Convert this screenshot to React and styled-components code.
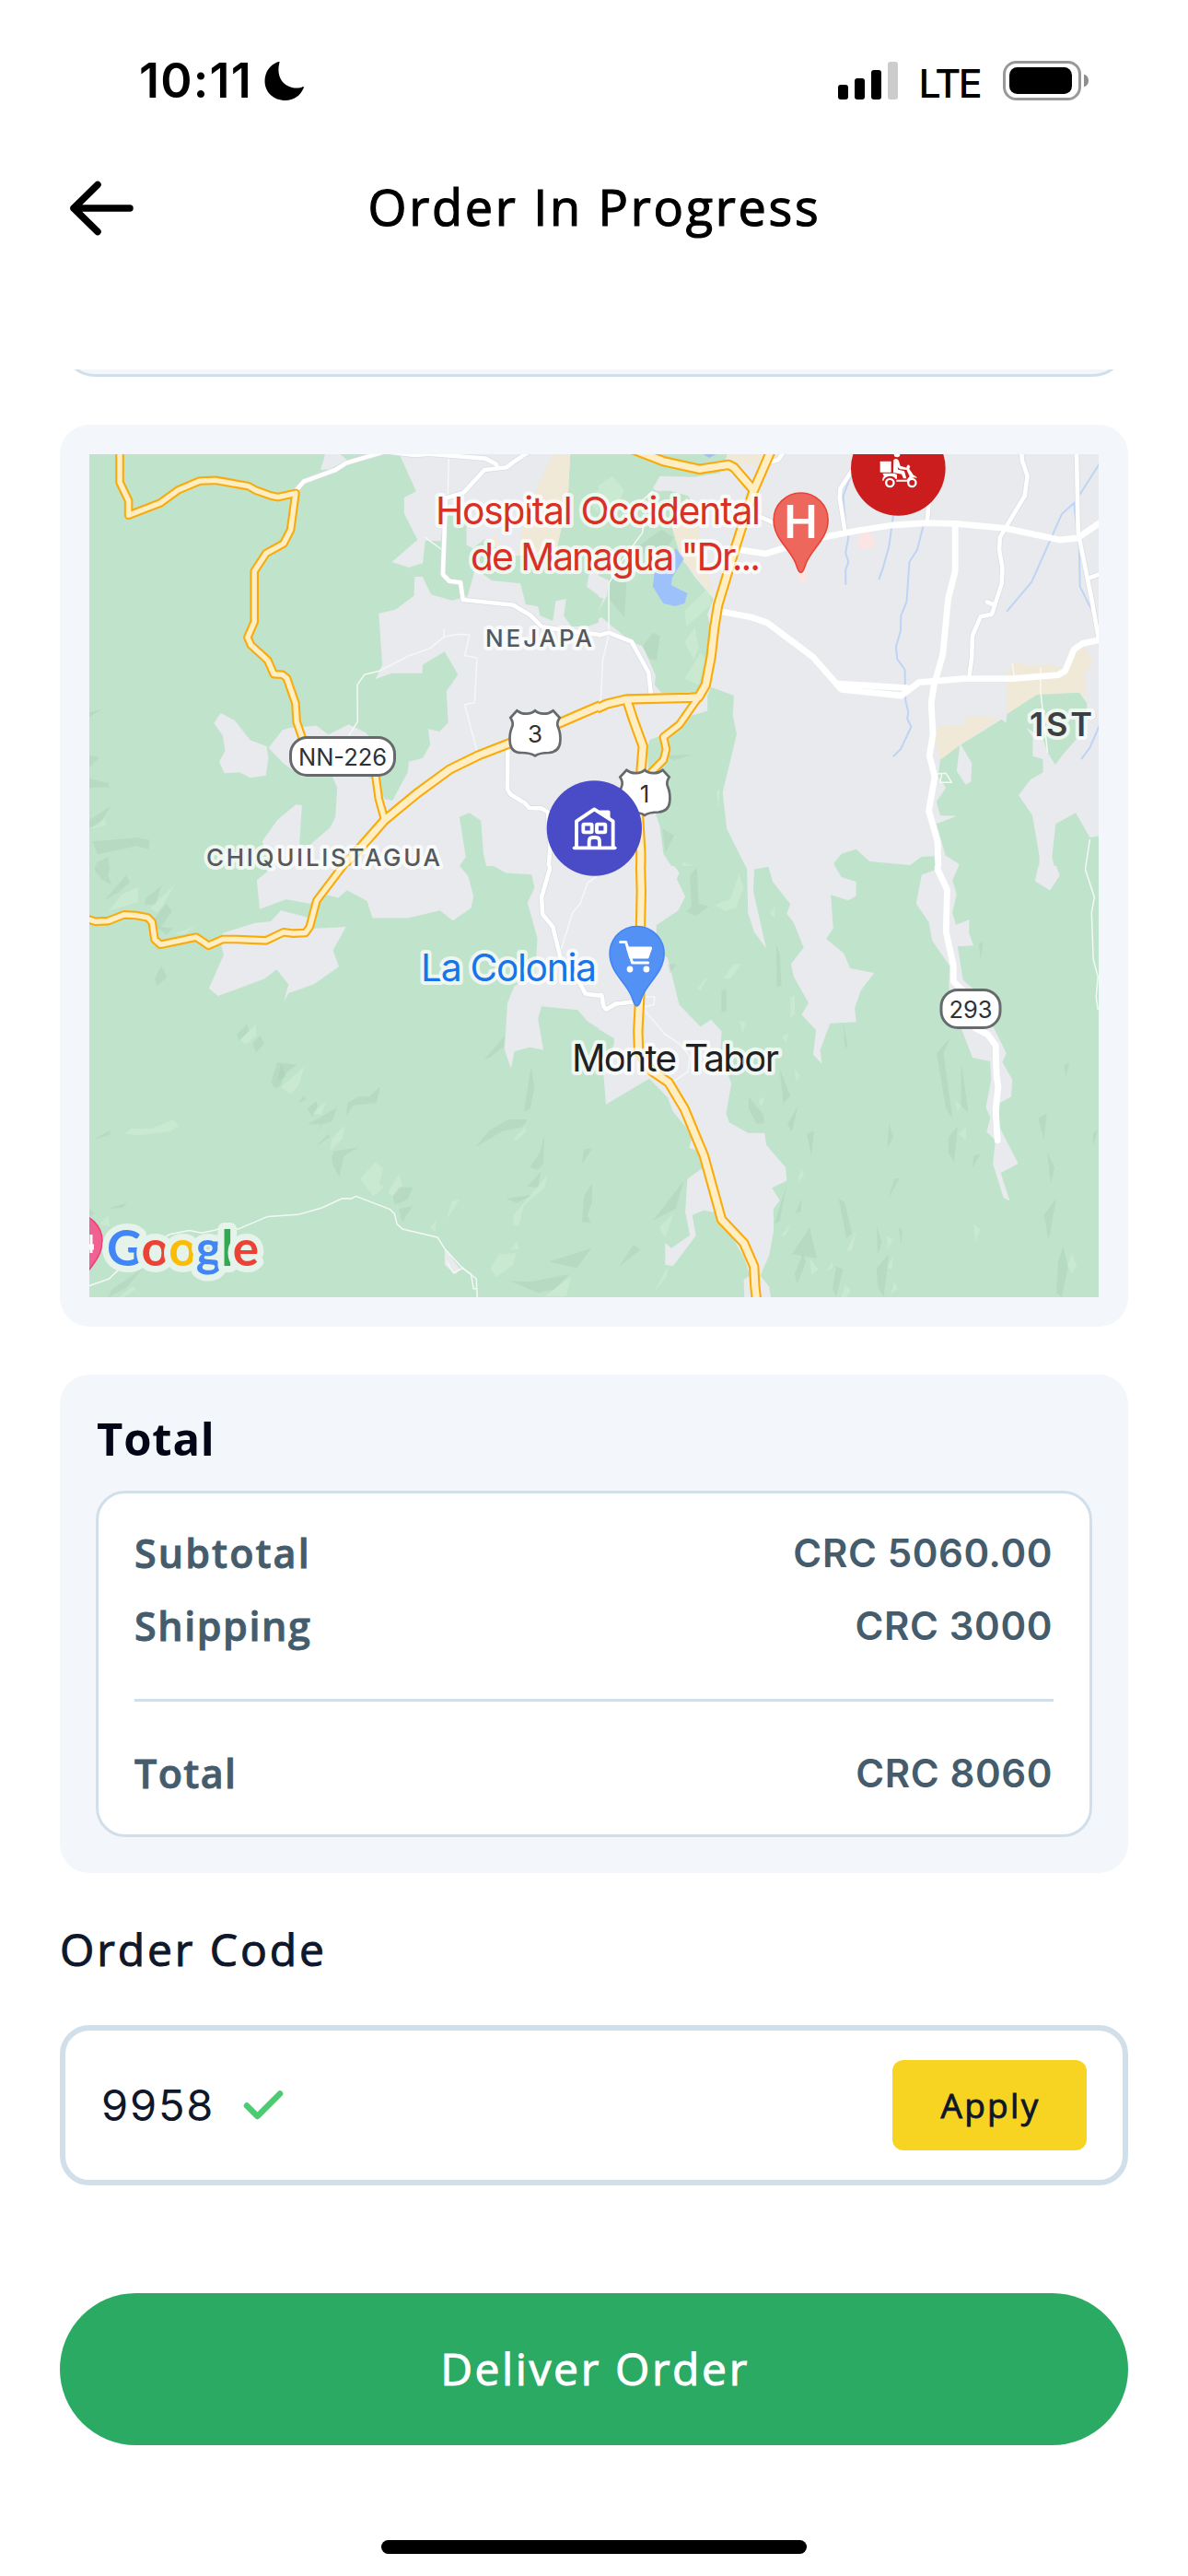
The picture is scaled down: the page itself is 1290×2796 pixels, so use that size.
import React from "react";
import styled, { createGlobalStyle } from "styled-components";

const GlobalStyle = createGlobalStyle`
  *, *::before, *::after { box-sizing: border-box; }
  body { margin: 0; background: #ffffff; }
`;

const sans = `"Open Sans", "Noto Sans", sans-serif`;
const system = `Inter, Roboto, sans-serif`;

const Screen = styled.main`
  display: flex;
  flex-direction: column;
  width: 1290px;
  height: 2796px;
  overflow: hidden;
  background: #ffffff;
  font-family: ${sans};
`;

const StatusBar = styled.div`
  display: flex;
  align-items: center;
  justify-content: space-between;
  height: 176px;
  padding: 0 107px 0 151px;
`;

const StatusGroup = styled.div`
  display: flex;
  align-items: center;
  gap: ${(p) => p.$gap}px;
`;

const Clock = styled.span`
  font: 600 52px/60px ${system};
  letter-spacing: 1.2px;
  color: #000;
`;

const Network = styled.span`
  font: 500 43px/60px ${system};
  letter-spacing: -2.6px;
  color: #000;
  padding-top: 3px;
  margin-left: -3px;
`;

const Header = styled.header`
  display: grid;
  grid-template-columns: 80px 1fr 80px;
  align-items: center;
  height: 100px;
  padding: 0 70px;
  margin-bottom: 125px;
`;

const BackButton = styled.button`
  display: flex;
  padding: 0;
  border: 0;
  background: none;
  color: #000;
`;

const Title = styled.h1`
  margin: 0;
  padding: 0 0 4px 1px;
  text-align: center;
  font-weight: 500;
  font-size: 54px;
  line-height: 60px;
  letter-spacing: 2.7px;
  -webkit-text-stroke: 1.2px currentColor;
  color: #000;
`;

const ScrollArea = styled.section`
  display: flex;
  flex-direction: column;
  padding: 0 65px;
  overflow: hidden;
`;

const PreviousCard = styled.div`
  height: 88px;
  margin: -80px 0 52px;
  flex: none;
  border: 3px solid #d1dfea;
  border-radius: 39px;
  background: #f3f6fb;
`;

const MapCard = styled.div`
  padding: 32px;
  margin-bottom: 52px;
  border-radius: 32px;
  background: #f3f6fb;
`;

const MapSvg = styled.svg`
  display: block;
  width: 1096px;
  height: 915px;
`;

const TotalCard = styled.div`
  padding: 39px;
  margin-bottom: 53px;
  border-radius: 32px;
  background: #f3f6fb;
`;

const CardTitle = styled.h2`
  margin: 0 0 27px;
  padding-left: 1px;
  font-weight: 700;
  font-size: 49px;
  line-height: 60px;
  letter-spacing: 0.8px;
  color: #020617;
`;

const Summary = styled.div`
  display: flex;
  flex-direction: column;
  gap: 19px;
  padding: 35px 39px 36px;
  border: 3px solid #d1dfea;
  border-radius: 32px;
  background: #ffffff;
`;

const SummaryRow = styled.div`
  display: flex;
  justify-content: space-between;
  font-weight: 600;
  font-size: 43px;
  line-height: 60px;
  letter-spacing: ${(p) => p.$track ?? 2}px;
  -webkit-text-stroke: 0.9px currentColor;
  color: #455c6c;
`;

const Amount = styled.span`
  margin-right: 1px;
  font-family: ${system};
  font-size: 42px;
  letter-spacing: 0.6px;
  -webkit-text-stroke: 0;
`;

const Divider = styled.hr`
  width: 100%;
  height: 3px;
  margin: 30px 0 29px;
  border: 0;
  background: #d1dfea;
`;

const FieldLabel = styled.label`
  margin-bottom: 52px;
  font-weight: 500;
  font-size: 48px;
  line-height: 60px;
  letter-spacing: 2.9px;
  -webkit-text-stroke: 1px currentColor;
  color: #0f172a;
`;

const CodeField = styled.div`
  display: flex;
  align-items: center;
  height: 174px;
  padding: 0 39px;
  margin-bottom: 117px;
  border: 6px solid #d1dfea;
  border-radius: 32px;
  background: #ffffff;
`;

const CodeValue = styled.span`
  width: 154px;
  font-family: ${system};
  font-size: 47px;
  line-height: 60px;
  letter-spacing: 1.8px;
  color: #0f172a;
`;

const ApplyButton = styled.button`
  width: 211px;
  height: 98px;
  margin-left: auto;
  padding: 0 0 0 2px;
  border: 0;
  border-radius: 12px;
  background: #f8d422;
  color: #0f172a;
  font: 500 37px/60px ${sans};
  letter-spacing: 2.3px;
  -webkit-text-stroke: 0.9px currentColor;
`;

const DeliverButton = styled.button`
  height: 165px;
  flex: none;
  padding: 0 0 2px 2px;
  border: 0;
  border-radius: 83px;
  background: #2baa64;
  color: #ffffff;
  font: 500 48px/60px ${sans};
  letter-spacing: 2.6px;
  -webkit-text-stroke: 1px currentColor;
`;

const HomeIndicator = styled.div`
  width: 462px;
  height: 15px;
  margin: 103px auto 0;
  border-radius: 8px;
  background: #000;
`;

const GREEN = "#c0e3cb";
const GREY = "#e8eaed";
const SAND = "#f0e9d8";

const tiles = [
  {
    id: "nw",
    x: 97, y: 493, w: 553, h: 447,
    view: "96.7 129 1445.2 1341",
    base: GREEN,
    areas: [
      [GREY, "965,100 1024,250 990,270 990,322 1028,408 955,480 1003,498 1020,528 1018,590 965,635 918,647 928,815 908,862 955,842 1042,842 1042,815 1105,772 1143,847 1110,900 1115,1003 1090,1032 1058,1023 1064,1075 1043,1118 1003,1130 1000,1165 957,1257 935,1252 905,1190 870,1170 787,1180 800,1215 795,1310 780,1345 722,1402 693,1400 700,1272 683,1270 630,1320 587,1390 600,1430 620,1470 590,1520 1600,1520 1600,100"],
      [GREY, "768,120 753,180 780,178 828,148 800,120"],
      [GREY, "470,972 510,997 553,1060 600,1080 605,1118 598,1175 553,1183 523,1165 480,1168 465,1130 482,1095 475,1045 450,1005"],
      [GREY, "605,1085 645,1027 665,1020 742,1013 775,1042 833,1009 880,1035 900,1060 900,1180 700,1180 645,1133"],
      [GREEN, "1043,484 1050,410 1095,412 1105,300 1167,300 1167,425 1185,435 1220,405 1260,430 1300,460 1420,455 1455,270 1462,100 1600,100 1600,480 1515,520 1508,560 1555,600 1543,640 1600,620 1600,655 1510,690 1465,690 1443,655 1450,600 1420,607 1412,672 1376,655 1370,625 1335,618 1320,550 1238,540 1192,500 1170,592 1125,605 1067,586 1042,528 1020,528 1003,498"],
      [SAND, "1415,120 1462,120 1455,270 1420,450 1310,460 1325,370 1375,220"],
      [SAND, "1235,400 1252,395 1262,435 1245,430"],
      [GREEN, "1147,1310 1175,1297 1208,1322 1215,1430 1230,1500 1150,1500 1147,1470 1165,1440"],
    ],
    dark: ["97,1185 150,1200 153,1213 97,1215", "97,1320 157,1275 125,1335 97,1345", "105,1390 230,1378 268,1385 265,1415 230,1405 120,1432", "115,1460 150,1440 155,1500 130,1490", "97,1110 125,1115 97,1150", "97,970 132,960 97,985"],
    light: ["97,1350 140,1315 145,1337", "1515,270 1568,220 1568,350 1530,310"],
    streams: [],
    lanes: ["1117,129 1114,270", "833,1045 858,1000 857,880 877,847 920,835 1000,787 1065,760 1103,724 1145,715 1176,718 1162,785 1197,792 1190,938 1162,944 1200,1110", "1103,700 1103,724", "1050,400 1095,438", "1570,740 1555,790 1548,935"],
    streets: ["682,248 705,218 795,180 825,158 925,124", "950,122 1020,132 1060,128 1220,143 1250,160 1255,172", "1345,120 1300,155 1280,172 1218,180 1158,255 1108,272 1100,520 1118,542 1150,547 1157,603 1300,620 1350,655 1380,690 1430,700 1550,718 1600,700", "1284,1080 1283,1220 1292,1237 1333,1265 1345,1281 1380,1282 1398,1295 1405,1400 1398,1500"],
    avenues: [],
    roads: ["183,110 183,220 208,280 208,328 298,288 350,245 410,216 455,214 548,233 570,247 612,264 632,269 682,256 668,375 648,420 598,452 565,510 565,675 546,725 555,750 603,800 620,845 645,847 657,858 682,940 685,1000 700,1050", "908,1165 918,1250 935,1320"],
    highways: ["760,1540 816,1470 870,1405 935,1320 1025,1235 1120,1155 1200,1110 1285,1072 1430,1005 1490,975 1545,948 1600,925"],
  },
  {
    id: "ne",
    x: 650, y: 493, w: 543, h: 447,
    view: "26.1 129 1419 1341",
    base: GREY,
    areas: [
      [GREEN, "-20,100 395,100 385,160 370,190 300,203 200,200 180,240 190,248 230,248 280,265 300,300 240,330 235,370 270,480 300,530 352,600 335,650 345,700 330,860 325,905 205,907 185,880 188,850 152,755 120,740 55,680 35,660 -20,690 -20,570 40,600 25,640 50,590 55,540 -20,500"],
      [GREEN, "345,887 410,915 407,980 418,1040 378,1230 390,1350 445,1475 445,1500 250,1500 210,1430 200,1340 170,1240 165,1100 170,1060 240,1030 275,985 335,965 335,915"],
      [SAND, "235,370 275,270 290,290 325,450 352,600 310,530 260,470"],
      [SAND, "400,120 510,120 475,168 430,160 385,150"],
      ["#9dc1fa", "245,435 268,470 235,530 232,555 278,582 270,615 243,624 210,615 180,560 185,510 215,500"],
      ["#9dc1fa", "310,120 375,120 340,141"],
      ["#fbe5e4", "765,385 795,380 812,415 805,435 762,435"],
      ["#fbe5e4", "588,515 612,505 620,540 595,548"],
      [SAND, "1185,980 1185,840 1208,800 1240,818 1320,815 1345,830 1365,755 1400,750 1430,805 1405,840 1410,925 1390,905 1270,912"],
      [SAND, "980,1060 990,1015 1060,1010 1075,980 1165,988 1060,1072 995,1125"],
      [GREEN, "995,1125 1050,1078 1170,992 1182,1005 1185,975 1270,912 1390,905 1412,940 1410,1020 1345,1105 1322,1140 1300,1100 1285,1050 1240,1020 1258,1050 1258,1112 1287,1122 1287,1165 1250,1190 1218,1240 1257,1305 1277,1440 1275,1500 1030,1500 1050,1465 1010,1435 985,1333 1042,1307 995,1305 985,1260 1012,1215 990,1180"],
      [GREY, "1052,1070 1085,1135 1083,1195 1068,1205 1042,1160"],
      [GREEN, "1323,1333 1380,1297 1420,1377 1460,1370 1460,1500 1325,1500 1313,1440"],
      [GREEN, "694,1460 715,1430 757,1415 795,1455 910,1467 942,1440 978,1438 990,1500 700,1500"],
    ],
    dark: ["85,490 105,540 100,660 55,600 60,540", "205,375 240,400 200,470 160,440 130,500 110,450", "150,755 180,710 200,720 190,800 170,795", "208,1350 240,1370 215,1430", "205,1110 290,1108 240,1125"],
    light: ["0,250 65,200 98,245 80,300 0,300", "270,640 340,560 345,620 275,690", "270,860 315,775 330,800 310,880", "262,1500 265,1455 292,1468", "270,740 300,690 310,760 295,800", "360,1230 370,1215 368,1285"],
    streams: ["742,200 720,265 727,360 735,400 727,450 735,480 727,505 727,552", "862,330 850,430 833,500 822,535", "948,360 930,440 908,480 900,610 884,655 883,705 870,755 873,795 895,830 897,930 905,970 902,990 913,1017 883,1090 863,1112", "1450,155 1378,285 1340,325 1255,545 1185,640", "1375,290 1390,440 1392,560 1427,640", "1450,1005 1420,1085 1397,1120"],
    lanes: ["55,700 55,550 90,480 150,385 155,355", "180,250 130,300", "55,715 38,800 32,930", "1200,810 1205,850", "1280,825 1280,900 1300,1100", "985,1170 1012,1168 1028,1198 995,1198 1000,1170", "1420,1385 1407,1480"],
    streets: ["480,330 522,352", "725,380 710,270 712,240 755,165", "958,353 962,300 970,250", "1180,370 1165,400 1163,440 1172,500 1170,550 1142,650 1110,658 1087,720 1085,790 1077,860", "1128,610 1145,618", "1382,110 1387,385 1425,600 1445,730", "1418,532 1460,515", "-20,718 30,718 55,710 120,740 168,840 175,915", "510,155 535,148 552,120", "1225,110 1228,150 1243,200 1235,265 1185,360"],
    avenues: ["368,640 460,660 505,678 635,790 700,875 715,895 885,915 935,872 1060,860 1200,860 1330,848 1350,835 1375,765 1400,745 1443,735 1480,733", "700,876 900,890", "425,440 500,453 600,418 660,400 760,378 860,360 960,353 1040,355 1180,370 1335,408 1385,402 1445,355 1480,330", "1038,360 1038,510 1018,600 1003,780 978,880 970,940 975,1040 965,1110 980,1180 963,1290 988,1390 990,1480 1000,1520"],
    roads: ["310,920 255,1010 210,1050 218,1090 210,1125 175,1165"],
    highways: ["120,112 210,152 312,178 395,163 410,172 465,245", "522,100 465,250 415,430 365,620 355,690 345,790 330,880 310,920 285,922 105,927 50,942 0,968 -40,985", "108,935 125,995 152,1080 145,1180", "139,1290 146,1430 145,1520"],
  },
  {
    id: "sw",
    x: 97, y: 940, w: 553, h: 468,
    view: "96.7 29.6 1445.2 1384.6",
    base: GREEN,
    areas: [
      [GREY, "590,-20 620,30 572,75 580,168 655,137 722,150 770,122 803,132 828,107 885,142 900,197 1000,197 1092,172 1128,205 1180,165 1187,128 1172,62 1147,28 1155,-20"],
      [GREY, "1225,-20 1245,30 1278,52 1352,57 1360,100 1340,147 1368,260 1362,380 1303,415 1283,470 1275,620 1293,680 1303,625 1345,612 1385,620 1370,520 1380,480 1483,492 1510,528 1568,570 1600,590 1600,-20"],
      [GREY, "475,245 565,213 612,207 640,172 720,195 735,230 825,225 788,300 805,353 733,410 662,438 648,467 662,410 628,362 593,392 462,447 436,422 478,315 470,280"],
      [GREY, "1105,1258 1150,1325 1135,1340 1105,1310"],
    ],
    dark: ["125,0 155,30 150,60 160,90 135,75 110,40", "140,140 200,60 212,80 185,110", "255,135 300,95 285,150 255,155", "290,185 315,150 332,175 300,225 335,230 315,250 275,215", "300,350 318,385 290,415 282,395", "515,570 545,537 550,560 520,590", "560,600 580,573 593,600 570,630", "630,660 685,668 650,700 640,735 625,745 612,725", "632,720 640,665 655,705", "690,790 705,767 712,780", "715,810 740,785 745,800 730,835", "715,860 800,805 785,850 755,860 745,885 752,858", "825,835 830,790 860,770 890,770 922,738 912,790 845,798", "740,930 775,890 780,900", "785,965 790,945 860,933 820,960 806,1027 788,990", "112,907 155,878 155,892", "958,1090 975,1060 1015,1062 1000,1100 965,1117", "975,1130 1013,1123 985,1172", "1218,650 1275,575 1272,610 1232,645", "1350,675 1360,740 1348,810 1330,817", "1193,932 1230,880 1285,843 1340,843 1325,868 1270,880", "1388,895 1385,985 1370,1005 1347,998 1375,950", "1340,1060 1378,1010 1370,1062", "1280,1098 1356,1085 1310,1112", "1400,1300 1522,1257 1480,1320", "1290,1362 1350,1365 1460,1340 1415,1390 1370,1400", "1500,940 1525,935 1495,985", "1500,1090 1523,1050 1523,1110 1510,1150 1520,1175 1495,1172", "150,1130 205,1110 190,1127", "97,1130 112,1145 97,1155", "160,1390 250,1320 200,1385 150,1414"],
    light: ["150,175 190,120 235,98 235,145", "270,165 340,88 300,165 290,180", "330,250 398,222 370,248", "525,590 568,537 572,575 540,602", "640,740 708,672 690,735 668,762", "730,825 770,782 755,828", "780,945 785,905 822,860 815,905", "197,890 215,873 275,872 335,843 350,865 325,882 235,895", "865,1035 908,980 930,1000 920,1050 932,1062 903,1090", "945,1078 975,1018 985,1055 957,1090", "1300,905 1335,865 1335,885 1308,912", "1300,1150 1395,1025 1390,1060 1330,1120 1315,1187 1300,1180", "1110,1165 1125,1107 1148,1100", "1063,1190 1080,1168 1080,1205", "1235,1320 1260,1275 1308,1272 1300,1310 1250,1350", "1290,1260 1310,1235 1318,1262", "125,1180 150,1150 155,1187", "1390,1412 1465,1345 1450,1412", "180,1414 220,1378 230,1388 195,1414"],
    streams: [],
    lanes: ["1535,65 1510,85 1490,150 1468,180 1435,300", "97,1377 153,1355 185,1320 300,1230 325,1212 380,1200 415,1208 450,1200 480,1188 520,1195 603,1155 688,1149 755,1128 815,1097 840,1098 853,1090 950,1132 963,1147 970,1180 985,1195 1085,1222 1105,1258 1155,1320 1195,1355 1198,1430", "1155,1320 1180,1340 1187,1387 1195,1387", "1112,1302 1130,1336 1158,1320"],
    streets: ["1403,-20 1403,40 1380,130 1383,185 1412,225 1435,330", "1485,400 1505,440 1550,447 1560,485 1600,480"],
    avenues: [],
    roads: ["80,196 115,208 150,206 195,186 230,188 262,195 275,210 282,265 298,282 400,258 435,285 475,265 515,265 598,269 648,242 675,246 710,244 722,225 742,140 816,30 850,-20"],
    highways: [],
  },
  {
    id: "se",
    x: 650, y: 940, w: 543, h: 468,
    view: "26.1 29.6 1419 1384.6",
    base: GREEN,
    areas: [
      [GREY, "-30,-20 205,-20 255,50 248,72 272,128 252,172 190,220 190,300 222,325 255,475 315,545 345,523 375,560 372,630 390,690 403,727 388,825 397,853 450,887 497,887 502,925 557,998 560,1040 518,1063 540,1103 522,1132 523,1200 510,1280 485,1345 510,1380 517,1430 440,1430 438,1357 455,1345 440,1290 380,1170 358,1143 325,1135 292,1150 302,1217 237,1314 215,1310 215,1240 233,1257 285,1215 272,1140 278,1035 320,1000 305,943 283,935 290,905 275,870 237,818 222,773 170,712 47,795 40,700 70,600 70,583 0,535 -30,520"],
      [GREY, "430,-20 447,40 450,180 467,240 502,295 465,110 468,40 508,32 520,80 570,152 560,183 580,212 608,292 572,343 580,385 622,470 602,507 643,557 635,635 660,665 655,620 683,535 757,530 753,487 770,430 808,373 740,358 722,310 672,263 692,230 685,122 735,140 757,125 757,80 715,65 693,22 705,-20"],
      [GREY, "980,-20 985,40 943,58 927,150 963,210 973,270 1022,350 1020,420 1055,550 1087,645 1137,657 1140,715 1125,805 1138,838 1127,883 1152,910 1145,985 1175,1095 1193,1105 1167,1015 1217,985 1160,860 1165,790 1197,770 1200,715 1172,660 1183,630 1150,555 1090,425 1060,395 1045,288 1090,285 1077,245 1078,202 1040,218 1030,180 1042,120 1030,75 1050,25 1013,-20"],
      [GREY, "1278,-20 1278,10 1264,78 1307,108 1335,60 1308,-20"],
    ],
    dark: ["285,60 305,35 310,150 340,160 300,190 275,175 290,160", "530,285 540,310 545,415 532,417", "375,430 388,425 388,495 375,500", "720,530 732,605 725,617", "985,630 1025,580 1005,630 1030,840 1012,810", "1055,660 1075,820 1055,800", "1020,900 1045,865 1035,980 1018,950", "452,770 495,830 495,855 475,858 452,810", "540,680 570,768 550,792", "562,860 592,798 575,882", "617,890 637,882 630,960", "850,855 862,900 845,937", "848,1098 865,1035 880,1032", "1105,280 1117,272 1110,333", "1347,670 1362,660 1352,707", "1273,840 1298,823 1290,905", "1300,950 1320,1000 1308,1050", "1290,1150 1325,1098 1303,1230", "1330,1300 1345,1250 1358,1320 1340,1414 1325,1400", "707,1098 725,1110 745,1210 730,1225", "815,1185 830,1240 818,1275", "575,1275 625,1190 645,1290", "582,1340 605,1275 615,1300 590,1370", "690,1385 700,1315 720,1325 700,1414", "815,1320 850,1275 835,1414 818,1380", "180,1168 268,1040 245,1130", "85,1315 125,1245 145,1262", "525,1180 560,1050 540,1170", "585,1145 602,1098 600,1140", "1090,960 1108,955 1088,998", "1428,890 1443,875 1430,930", "877,1190 888,1200 885,1250", "223,345 248,345 228,375"],
    light: ["355,155 400,135 425,55 438,100 415,165 385,173", "512,180 528,158 525,200", "380,390 410,345 432,343 400,392", "305,425 330,388 335,390 315,427", "570,450 583,443 583,505 570,517", "425,525 445,530 435,568", "545,580 565,565 560,597", "582,680 597,703 585,722", "480,780 498,770 487,805", "1035,780 1055,800 1045,818", "1047,890 1070,865 1068,910", "590,1050 600,1003 610,1020", "540,1220 570,1180 558,1215", "197,1190 240,1145 215,1222", "1090,1180 1110,1195 1095,1235", "843,1215 862,1230 848,1258", "730,1265 758,1200 745,1265", "625,1290 650,1325 630,1342", "673,1330 690,1300 690,1320", "845,1320 860,1285 860,1325", "855,1405 865,1365 875,1385", "715,1414 725,1375 742,1390 730,1414", "1357,1310 1370,1275 1383,1315 1368,1340", "180,1405 222,1315 220,1345"],
    streams: [],
    lanes: ["155,490 215,570 255,600 285,640 280,690 240,720", "160,450 185,450 183,475 155,482", "1415,-10 1407,40 1433,130 1425,180 1430,330 1443,385 1438,450 1443,490", "0,78 15,65"],
    streets: ["-20,445 35,445 40,480 48,490 75,472 130,465"],
    avenues: ["988,-20 988,40 1015,105 1012,240 1033,350 1033,400 1060,430", "1095,550 1130,570 1153,605 1155,700 1160,740 1153,810 1158,910"],
    roads: [],
    highways: ["144,-20 147,110 145,220 143,450 138,560 140,625 165,670 180,690 225,725 270,810 325,960 375,1165 438,1240 467,1315 470,1380 475,1430"],
  },
];

const Line = styled.polyline.attrs({ vectorEffect: "non-scaling-stroke" })`
  fill: none;
  stroke: ${(p) => p.$color};
  stroke-width: ${(p) => p.$width}px;
  stroke-linecap: round;
  stroke-linejoin: round;
`;

const Lines = ({ items, color, width }) =>
  items.map((points) => <Line key={points} points={points} $color={color} $width={width} />);

const Shapes = ({ items, color }) =>
  items.map((points) => <polygon key={points} points={points} fill={color} />);

const Tile = ({ t }) => (
  <svg x={t.x} y={t.y} width={t.w} height={t.h} viewBox={t.view} preserveAspectRatio="none">
    <rect x="-50" y="-50" width="1800" height="1800" fill={t.base} />
    {t.areas.map(([color, points]) => (
      <polygon key={points} points={points} fill={color} />
    ))}
    <Shapes items={t.dark} color="rgba(150, 190, 165, 0.22)" />
    <Shapes items={t.light} color="rgba(215, 240, 215, 0.42)" />
    <Lines items={t.streams} color="#bfd4f5" width={2} />
    <Lines items={t.lanes} color="#f5f8f6" width={1.5} />
    <Lines items={t.streets} color="#d9dce0" width={6} />
    <Lines items={t.streets} color="#ffffff" width={4.6} />
    <Lines items={t.avenues} color="#ffffff" width={6.8} />
    <Lines items={t.roads} color="#f9ab0c" width={9.6} />
    <Lines items={t.highways} color="#f9ab0c" width={11.4} />
    <Lines items={t.roads} color="#ffeec4" width={5.4} />
    <Lines items={t.highways} color="#ffeec4" width={7.2} />
  </svg>
);

const MapLabel = styled.text`
  font-family: ${system};
  font-weight: ${(p) => p.$weight ?? 400};
  font-size: ${(p) => p.$size}px;
  fill: ${(p) => p.$color};
  stroke: ${(p) => (p.$halo === false ? "none" : "rgba(255, 255, 255, 0.72)")};
  stroke-width: 8px;
  stroke-linejoin: round;
  paint-order: stroke;
`;

const Brand = styled.text`
  font-family: Lato, "Open Sans", sans-serif;
  font-weight: 700;
  font-size: 53px;
  stroke: #e5f3ea;
  stroke-width: 14px;
  stroke-linejoin: round;
  paint-order: stroke;
`;

const brandLetters = [
  ["G", "#4285f4"],
  ["o", "#ea4335"],
  ["o", "#fbbc04"],
  ["g", "#4285f4"],
  ["l", "#34a853"],
  ["e", "#ea4335"],
];

const Pin = ({ x, y, fill, edge, children }) => (
  <g transform={`translate(${x} ${y})`}>
    <path
      d="M0 57 C-3 57 -3.500 52 -6 46 C-12 31 -29.500 20 -29.500 0 A29.500 29.500 0 0 1 29.500 0 C29.500 20 12 31 6 46 C3.500 52 3 57 0 57Z"
      fill={fill}
      stroke={edge}
      strokeWidth="1.6"
    />
    {children}
  </g>
);

const Shield = ({ x, y, label }) => (
  <g transform={`translate(${x} ${y})`}>
    <path
      transform="scale(.3333)"
      d="M0 4 Q-12 15 -30 14 Q-46 14 -59 4 L-80 27 Q-68 45 -76 60 Q-84 80 -82 104 Q-80 141 -45 141 Q-15 141 0 151 Q15 141 45 141 Q80 138 82 104 Q84 80 76 60 Q68 45 80 27 L59 4 Q46 14 30 14 Q12 15 0 4Z"
      fill="#fff"
      stroke="#666a6d"
      strokeWidth="8"
    />
    <MapLabel x="0" y="36" textAnchor="middle" $size={26} $color="#303134" $halo={false}>
      {label}
    </MapLabel>
  </g>
);

const RoadPill = ({ x, y, width, label, textLength }) => (
  <g transform={`translate(${x} ${y})`}>
    <rect x="1.5" y="1.500" width={width - 3} height="41" rx="18" fill="#fff" stroke="#666a6d" strokeWidth="3" />
    <MapLabel x={width / 2} y="31.500" textAnchor="middle" textLength={textLength} $size={25.5} $color="#303134" $halo={false}>
      {label}
    </MapLabel>
  </g>
);

const HouseMarker = () => (
  <g transform="translate(590 820) scale(.3333)">
    <circle cx="166" cy="237" r="155" fill="#4a4cc7" />
    <g fill="none" stroke="#fff" strokeWidth="11.500" strokeLinecap="round" strokeLinejoin="round">
      <path d="M108 300V214L166 175L227 214V300" />
      <path d="M101 301H233" />
      <rect x="130" y="224" width="28" height="26" rx="3" />
      <rect x="174" y="224" width="28" height="26" rx="3" />
      <path d="M149 300V280Q149 267 161 267H171Q183 267 183 280V300" />
      <path d="M186 184H212V202L196 190Z" fill="#fff" />
    </g>
  </g>
);

const ScooterMarker = () => (
  <g transform="translate(840 485) scale(.3333)">
    <circle cx="406" cy="70" r="154" fill="#cc1d1e" />
    <g fill="#fff">
      <rect x="347" y="47" width="36" height="36" rx="2" />
      <circle cx="402" cy="24" r="10" />
      <path d="M391 42Q402 34 408 46L413 62L434 68V75L412 73L404 66L406 74L426 79L433 103H423L417 89L390 84Z" />
      <path d="M356 86H392L402 90V104H397Q393 95 379 95Q362 96 358 110H354Q355 98 360 95Q355 91 356 86Z" />
      <path d="M434 64L438 58L445 63L442 72L456 92Q464 95 468 102Q452 96 444 108L438 113H400V107H434L443 96L432 72Z" />
    </g>
    <g fill="#cc1d1e" stroke="#fff" strokeWidth="7">
      <circle cx="379" cy="117" r="12.500" />
      <circle cx="451" cy="117" r="12.500" />
    </g>
  </g>
);

const DeliveryMap = () => (
  <MapSvg viewBox="97 493 1096 915" role="img" aria-label="Delivery map">
    {tiles.map((t) => (
      <Tile key={t.id} t={t} />
    ))}
    <RoadPill x={314} y={799} width={116} label="NN-226" textLength={96} />
    <RoadPill x={1020.500} y={1073} width={67} label="293" textLength={47} />
    <Shield x={581} y={770} label="3" />
    <Shield x={700} y={834.500} label="1" />
    <MapLabel x="473" y="569" textLength="353" $size={41} $color="#d93025">Hospital Occidental</MapLabel>
    <MapLabel x="511" y="619" textLength="315" $size={41} $color="#d93025">de Managua "Dr...</MapLabel>
    <MapLabel x="527" y="702" textLength="116" $size={26} $weight={500} $color="#55595e">NEJAPA</MapLabel>
    <MapLabel x="224" y="939.500" textLength="254" $size={26} $weight={500} $color="#55595e">CHIQUILISTAGUA</MapLabel>
    <MapLabel x="457" y="1065" textLength="191" $size={41} $color="#1a73e8">La Colonia</MapLabel>
    <MapLabel x="621" y="1162.500" textLength="225" $size={40.500} $color="#202124">Monte Tabor</MapLabel>
    <MapLabel x="1118" y="799" textLength="68" $size={36} $weight={600} $color="#3c4043">1ST</MapLabel>
    <Pin x={869.600} y={564.500} fill="#ee675c" edge="#ea4335">
      <MapLabel x="0" y="19" textAnchor="middle" $size={49} $weight={600} $color="#fff" $halo={false}>H</MapLabel>
    </Pin>
    <Pin x={691.600} y={1035} fill="#5491f5" edge="#4285f4">
      <g fill="none" stroke="#fff" strokeWidth="3" strokeLinecap="round" strokeLinejoin="round">
        <path d="M-18 -12.500H-12L-5 10H12" />
        <path d="M-10 -6H15L11.500 4H-7Z" fill="#fff" />
      </g>
      <circle cx="-7.600" cy="17" r="3.400" fill="#fff" />
      <circle cx="10.300" cy="17" r="3.400" fill="#fff" />
    </Pin>
    <Pin x={81.500} y={1347} fill="#f06292" edge="#ec407a">
      <path d="M8 7H15M17.500 -7V13M14 5H19V8H14Z" fill="#fff" stroke="#fff" strokeWidth="3" />
    </Pin>
    <Brand x="116" y="1374" textLength="165">
      {brandLetters.map(([letter, color], i) => (
        <tspan key={i} fill={color}>
          {letter}
        </tspan>
      ))}
    </Brand>
    <HouseMarker />
    <ScooterMarker />
  </MapSvg>
);

const Moon = () => (
  <svg width="43" height="42" viewBox="0 0 43 42">
    <path d="M16.500 0.500C13 14 18 25 30 28C35 29.200 39 28.500 42 27C43 26.500 43 28 42.500 29C39 37 31.500 42 23 42C10 42 0.500 33 0.500 21C0.500 11.500 6 3.500 14.500 0.300C16 -0.200 16.800 -0.300 16.500 0.500Z" fill="#000" />
  </svg>
);

const Signal = () => (
  <svg width="66" height="42" viewBox="0 0 66 42">
    <rect x="0" y="25" width="11" height="16" rx="3" />
    <rect x="18" y="18" width="11" height="23" rx="3" />
    <rect x="36" y="9" width="11" height="32" rx="3" />
    <rect x="54" y="0" width="11" height="41" rx="3" fill="#ccc" />
  </svg>
);

const Battery = () => (
  <svg width="94" height="44" viewBox="0 0 94 44">
    <rect x="1.500" y="1.500" width="82" height="40" rx="13" fill="none" stroke="#999" strokeWidth="3" />
    <rect x="7" y="7" width="68" height="29" rx="8.500" />
    <path d="M88 14.500C91.500 16 93 18 93 21.500S91.500 27 88 28.500Z" fill="#8f8f8f" />
  </svg>
);

const BackArrow = () => (
  <svg width="80" height="60" viewBox="0 0 80 60" fill="none" stroke="currentColor" strokeWidth="7.500" strokeLinecap="round" strokeLinejoin="round">
    <path d="M71 30H10M36 4.500L10 30L36 55.500" />
  </svg>
);

const CheckMark = () => (
  <svg width="44" height="34" viewBox="0 0 44 34" fill="none" stroke="#4dcb71" strokeWidth="6.500" strokeLinecap="round" strokeLinejoin="round">
    <path d="M4 17.500L15.500 29L40 4.500" />
  </svg>
);

export default function App() {
  return (
    <>
      <GlobalStyle />
      <Screen>
        <StatusBar>
          <StatusGroup $gap={13}>
            <Clock>10:11</Clock>
            <Moon />
          </StatusGroup>
          <StatusGroup $gap={25}>
            <Signal />
            <Network>LTE</Network>
            <Battery />
          </StatusGroup>
        </StatusBar>
        <Header>
          <BackButton aria-label="Back">
            <BackArrow />
          </BackButton>
          <Title>Order In Progress</Title>
        </Header>
        <ScrollArea>
          <PreviousCard />
          <MapCard>
            <DeliveryMap />
          </MapCard>
          <TotalCard>
            <CardTitle>Total</CardTitle>
            <Summary>
              <SummaryRow $track={2.1}>
                <span>Subtotal</span>
                <Amount>CRC 5060.00</Amount>
              </SummaryRow>
              <SummaryRow $track={1.6}>
                <span>Shipping</span>
                <Amount>CRC 3000</Amount>
              </SummaryRow>
              <Divider />
              <SummaryRow $track={1.4}>
                <span>Total</span>
                <Amount>CRC 8060</Amount>
              </SummaryRow>
            </Summary>
          </TotalCard>
          <FieldLabel>Order Code</FieldLabel>
          <CodeField>
            <CodeValue>9958</CodeValue>
            <CheckMark />
            <ApplyButton>Apply</ApplyButton>
          </CodeField>
          <DeliverButton>Deliver Order</DeliverButton>
        </ScrollArea>
        <HomeIndicator />
      </Screen>
    </>
  );
}
